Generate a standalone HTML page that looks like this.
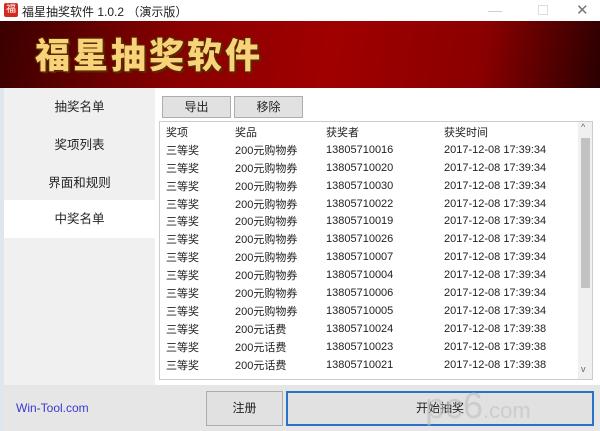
<!DOCTYPE html><html><head><meta charset="utf-8"><style>
*{margin:0;padding:0;box-sizing:border-box}
body{width:600px;height:431px;overflow:hidden;background:#fff;font-family:"Liberation Sans","Noto Sans CJK SC",sans-serif;font-size:12px;color:#222;position:relative}
.a{position:absolute}
.title{top:0;left:0;width:600px;height:21px;background:#fff}
.banner{top:21px;left:0;width:600px;height:67px;background:linear-gradient(100deg,#3a0000 0%,#8a0000 30%,#a00000 55%,#8a0000 80%,#2a0000 100%)}
.bt{left:35px;top:28px;font-size:35px;font-weight:900;color:#f8d37a;letter-spacing:3px;font-family:"Noto Sans CJK SC",sans-serif;text-shadow:2px 2px 0 #5a2a00,-1px -1px 0 #5a2a00,1px -1px 0 #5a2a00,-1px 1px 0 #5a2a00}
.side{left:4px;top:88px;width:151px;height:297px;background:#f0f0f0}
.it{position:absolute;left:0;width:151px;height:38px;line-height:38px;text-align:center;font-size:12.5px}
.btn{background:#e1e1e1;border:1px solid #adadad;text-align:center;font-size:12px}
table{border-collapse:collapse;font-size:11px}
td{height:17.9px;padding-left:6px;white-space:nowrap}
</style></head><body>
<div class="a title"></div>
<div class="a" style="left:4px;top:3px;width:14px;height:14px;background:#d42a1e;border-radius:2px;color:#fff;font-size:10px;line-height:14px;text-align:center">福</div>
<div class="a" style="left:22px;top:3px;font-size:12px">福星抽奖软件 1.0.2 （演示版）</div>
<div class="a" style="left:488px;top:2px;color:#ccc;font-size:14px">—</div>
<div class="a" style="left:538px;top:5px;width:10px;height:10px;border:1px solid #ddd"></div>
<div class="a" style="left:576px;top:1px;color:#777;font-size:15px">✕</div>
<div class="a banner"></div>
<div class="a bt">福星抽奖软件</div>
<div class="a" style="left:0;top:88px;width:4px;height:343px;background:#dfe6ee"></div>
<div class="a side">
<div class="it" style="top:0">抽奖名单</div>
<div class="it" style="top:38px">奖项列表</div>
<div class="it" style="top:76px">界面和规则</div>
<div class="it" style="top:112px;background:#fff">中奖名单</div>
</div>
<div class="a btn" style="left:162px;top:96px;width:69px;height:22px;line-height:20px">导出</div>
<div class="a btn" style="left:234px;top:96px;width:69px;height:22px;line-height:20px">移除</div>
<div class="a" style="left:159px;top:121px;width:434px;height:259px;border:1px solid #ccc;background:#fff;overflow:hidden">
<table class="a" style="left:0;top:1px;width:418px">
<colgroup><col style="width:69px"><col style="width:91px"><col style="width:118px"><col></colgroup>
<tr><td>奖项</td><td>奖品</td><td>获奖者</td><td>获奖时间</td></tr>
<tr><td>三等奖</td><td>200元购物券</td><td>13805710016</td><td>2017-12-08 17:39:34</td></tr>
<tr><td>三等奖</td><td>200元购物券</td><td>13805710020</td><td>2017-12-08 17:39:34</td></tr>
<tr><td>三等奖</td><td>200元购物券</td><td>13805710030</td><td>2017-12-08 17:39:34</td></tr>
<tr><td>三等奖</td><td>200元购物券</td><td>13805710022</td><td>2017-12-08 17:39:34</td></tr>
<tr><td>三等奖</td><td>200元购物券</td><td>13805710019</td><td>2017-12-08 17:39:34</td></tr>
<tr><td>三等奖</td><td>200元购物券</td><td>13805710026</td><td>2017-12-08 17:39:34</td></tr>
<tr><td>三等奖</td><td>200元购物券</td><td>13805710007</td><td>2017-12-08 17:39:34</td></tr>
<tr><td>三等奖</td><td>200元购物券</td><td>13805710004</td><td>2017-12-08 17:39:34</td></tr>
<tr><td>三等奖</td><td>200元购物券</td><td>13805710006</td><td>2017-12-08 17:39:34</td></tr>
<tr><td>三等奖</td><td>200元购物券</td><td>13805710005</td><td>2017-12-08 17:39:34</td></tr>
<tr><td>三等奖</td><td>200元话费</td><td>13805710024</td><td>2017-12-08 17:39:38</td></tr>
<tr><td>三等奖</td><td>200元话费</td><td>13805710023</td><td>2017-12-08 17:39:38</td></tr>
<tr><td>三等奖</td><td>200元话费</td><td>13805710021</td><td>2017-12-08 17:39:38</td></tr>
</table>
<div class="a" style="left:418px;top:0;width:15px;height:257px;background:#f0f0f0"></div>
<div class="a" style="left:421px;top:16px;width:9px;height:150px;background:#c2c2c2"></div>
<div class="a" style="left:421px;top:0;font-size:9px;color:#666">^</div>
<div class="a" style="left:421px;top:242px;font-size:9px;color:#666">v</div>
</div>
<div class="a" style="left:4px;top:385px;width:596px;height:46px;background:#e6e6e6"></div>
<div class="a" style="left:16px;top:401px;color:#3a3ad0;font-size:12px">Win-Tool.com</div>
<div class="a btn" style="left:206px;top:391px;width:77px;height:35px;line-height:33px">注册</div>
<div class="a btn" style="left:286px;top:391px;width:308px;height:35px;line-height:31px;border:2px solid #2a72c8">开始抽奖</div>
<div class="a" style="left:425px;top:385px;font-size:36px;color:rgba(190,190,190,0.6);font-family:'Liberation Sans',sans-serif">pc6<span style="font-size:22px">.com</span></div>
</body></html>
